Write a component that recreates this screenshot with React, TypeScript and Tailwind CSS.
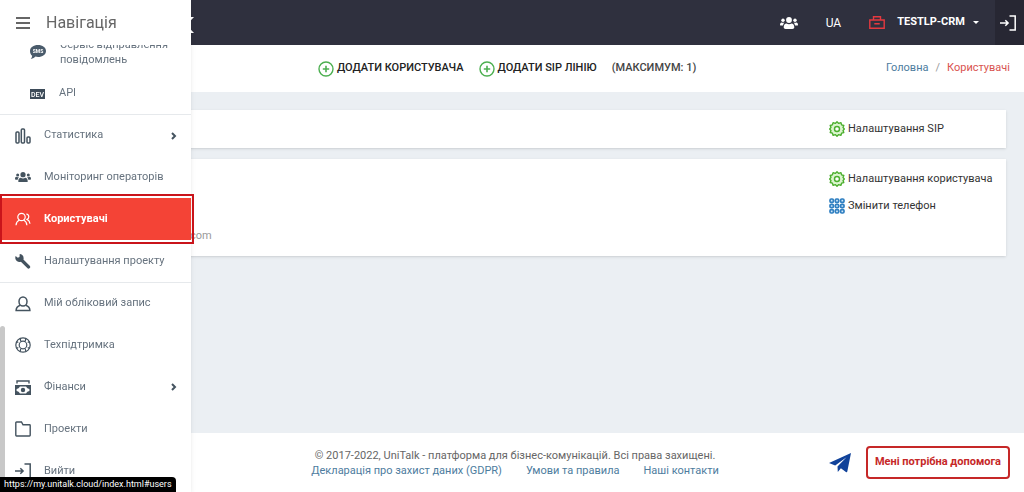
import type { ReactNode, SVGProps } from 'react';
import clsx from 'clsx';

type IconProps = SVGProps<SVGSVGElement>;

const strokeProps = {
  fill: 'none',
  stroke: 'currentColor',
  strokeWidth: 1.4,
};

function MenuIcon(props: IconProps) {
  return (
    <svg viewBox="0 0 14 12" fill="currentColor" {...props}>
      <path d="M0 0h14v2H0zM0 5h14v2H0zM0 10h14v2H0z" />
    </svg>
  );
}

function SmsIcon(props: IconProps) {
  return (
    <svg viewBox="0 0 16 14" {...props}>
      <path fill="currentColor" d="M8 0c4.500 0 8 2.400 8 5.900s-3.500 6-8 6c-.9 0-1.700-.1-2.500-.3C4.500 12.700 3 13.600.8 14c.8-.9 1.300-2 1.400-3.200C.8 9.600 0 7.900 0 5.900 0 2.400 3.500 0 8 0z" />
      <text x="8" y="8" textAnchor="middle" fill="#fff" fontSize="5" fontWeight="700">SMS</text>
    </svg>
  );
}

function DevIcon(props: IconProps) {
  return (
    <svg viewBox="0 0 15 10" {...props}>
      <path fill="currentColor" d="M0 0h15v10H0z" />
      <text x="7.500" y="7.600" textAnchor="middle" fill="#fff" fontSize="7" fontWeight="500">DEV</text>
    </svg>
  );
}

function BarsIcon(props: IconProps) {
  return (
    <svg viewBox="0 0 16 16" {...strokeProps} strokeWidth={1.500} {...props}>
      <rect x="1" y="4" width="3" height="11" rx="1" />
      <rect x="6.300" y="1" width="3.200" height="14" rx="1" />
      <rect x="12" y="9" width="3" height="6" rx="1" />
    </svg>
  );
}

function GroupIcon(props: IconProps) {
  return (
    <svg viewBox="0 0 18 12" fill="currentColor" {...props}>
      <circle cx="9" cy="3" r="2.900" />
      <circle cx="3" cy="3.300" r="1.700" />
      <circle cx="15" cy="3.300" r="1.700" />
      <path d="M3.700 10.300c0-2.500 1.100-3.900 2.800-3.900.7.500 1.500.8 2.500.8s1.800-.3 2.500-.8c1.700 0 2.800 1.400 2.800 3.900 0 1.100-.8 1.700-1.900 1.700H5.600c-1.100 0-1.900-.6-1.900-1.700z" />
      <path d="M0 8c0-1.700.6-2.600 1.600-2.600.9.600 2 .6 2.900.1C3.700 6.200 3.200 7.200 3 8.600H1C.4 8.600 0 8.400 0 8zM18 8c0-1.700-.6-2.600-1.600-2.600-.9.600-2 .6-2.900.1.800.7 1.300 1.700 1.500 3.100h2c.6 0 1-.2 1-.6z" />
    </svg>
  );
}

function UsersIcon(props: IconProps) {
  return (
    <svg viewBox="0 0 16 14" {...strokeProps} strokeWidth={1.200} {...props}>
      <circle cx="6.500" cy="5" r="3.700" />
      <path d="M1 13.200c.2-2.700 1.600-4.300 3.500-5.200M8.500 8c2 .9 3.200 2.500 3.400 5.200" />
      <path d="M11.300 2c1.600.2 2.500 1.300 2.500 2.800 0 1.300-.7 2.200-1.700 2.600 1.600.8 2.700 2.100 2.900 4.300" />
    </svg>
  );
}

function WrenchIcon(props: IconProps) {
  return (
    <svg viewBox="0 0 16 16" fill="currentColor" {...props}>
      <path d="M4.700 1.100 4.500 4 2.800 4.800.6 2.900C-.1 5 .4 6.900 1.800 8c1.200 1 2.800 1.200 4.100.7l6.400 6.400c.7.700 1.700.7 2.400 0s.7-1.700 0-2.400L8.400 6.500c.5-1.400.2-3-.9-4.200-.8-.8-1.800-1.200-2.800-1.200z" />
    </svg>
  );
}

function PersonIcon(props: IconProps) {
  return (
    <svg viewBox="0 0 16 16" {...strokeProps} strokeWidth={1.500} {...props}>
      <ellipse cx="8" cy="5.500" rx="4" ry="4.600" />
      <path d="M5.300 9.200C2.500 10 1.100 11.500 1.100 14.500h13.800c0-3-1.400-4.500-4.200-5.300" />
    </svg>
  );
}

function LifebuoyIcon(props: IconProps) {
  return (
    <svg viewBox="0 0 16 16" {...strokeProps} strokeWidth={1.200} {...props}>
      <circle cx="8" cy="8" r="7.200" />
      <circle cx="8" cy="8" r="3.800" />
      <path d="M5.200 1.400 5.800 4.500M10.800 1.400 10.200 4.500M5.200 14.600 5.800 11.500M10.800 14.600 10.200 11.500M3.300 5.500 1.600 4.600M12.700 5.500l1.700-.9M3.300 10.500l-1.700.9M12.700 10.500l1.700.9" />
    </svg>
  );
}

function MoneyIcon(props: IconProps) {
  return (
    <svg viewBox="0 0 16 15" {...strokeProps} {...props}>
      <path d="M2 3.500V1h12v2.500" />
      <path strokeWidth="1.600" d="M.8 5.800h14.400v8.400H.8z" />
      <circle cx="8" cy="10" r="1.500" fill="currentColor" />
      <path fill="currentColor" stroke="none" d="M1 6h4C4.500 8 3 9 1 9zM15 6h-4c.5 2 2 3 4 3zM1 14h4c-.5-2-2-3-4-3zM15 14h-4c.5-2 2-3 4-3z" />
    </svg>
  );
}

function FolderIcon(props: IconProps) {
  return (
    <svg viewBox="0 0 16 16" {...strokeProps} {...props}>
      <path d="M1.500 1h5L8 3.800h6.500c.4 0 .7.300.7.700v9.800c0 .4-.3.700-.7.700h-13c-.4 0-.7-.3-.7-.7V1.700c0-.4.3-.7.700-.7z" />
    </svg>
  );
}

function LoginIcon(props: IconProps) {
  return (
    <svg viewBox="0 0 16 16" {...strokeProps} strokeWidth={1.500} {...props}>
      <path d="M9.500 1h5.700v14H9.500M0 8h8M5.300 5.200 8.100 8l-2.800 2.800" />
    </svg>
  );
}

function BriefcaseIcon(props: IconProps) {
  return (
    <svg viewBox="0 0 16 13" {...strokeProps} {...props}>
      <path d="M.8 4h14.400v8.200H.8zM4.500 4V.8h7V4M5.300 7.700h5.400" />
    </svg>
  );
}

function PlusCircleIcon(props: IconProps) {
  return (
    <svg viewBox="0 0 16 16" {...strokeProps} {...props}>
      <circle cx="8" cy="8" r="7" />
      <path strokeWidth="1.600" d="M8 4.800v6.400M4.800 8h6.400" />
    </svg>
  );
}

function GearIcon(props: IconProps) {
  return (
    <svg viewBox="0 0 16 16" {...strokeProps} strokeLinejoin="round" {...props}>
      <path
        fill="#dcf5cf"
        d="m8 .8 1.700 1.600 2.200-.8.700 2.200 2.200.7-.8 1.900L15.300 8 14 9.600l.8 1.900-2.200.7-.7 2.200-2.200-.8L8 15.200l-1.700-1.600-2.200.8-.7-2.200-2.200-.7.800-1.900L.7 8 2 6.400l-.8-1.900 2.200-.7.700-2.200 2.200.8z"
      />
      <circle cx="8" cy="8" r="2.500" fill="#fff" />
    </svg>
  );
}

function KeypadIcon(props: IconProps) {
  const steps = [1, 6.300, 11.600];
  return (
    <svg viewBox="0 0 16 16" {...strokeProps} strokeWidth={1.700} {...props}>
      {steps.map((y) => steps.map((x) => (
        <rect key={`${x}-${y}`} x={x} y={y} width="3.400" height="3.400" rx="1.200" fill="#d3e8f8" />
      )))}
    </svg>
  );
}

function ChevronIcon(props: IconProps) {
  return (
    <svg viewBox="0 0 6 8" {...strokeProps} strokeWidth={2} {...props}>
      <path d="m1 1 3 3-3 3" />
    </svg>
  );
}

function PlaneIcon(props: IconProps) {
  return (
    <svg viewBox="0 0 22 20" fill="currentColor" {...props}>
      <path d="M22 0 0 10l6.200 2.400L17.500 4.200 8.500 13.500 8.800 19l3.100-3.700 5 3.700c.6.400 1.200.2 1.400-.5z" />
    </svg>
  );
}

interface NavItem {
  label: string;
  icon: ReactNode;
  active?: boolean;
  expandable?: boolean;
  divided?: boolean;
}

const navItems: NavItem[] = [
  { label: 'Статистика', icon: <BarsIcon className="size-4" />, expandable: true, divided: true },
  { label: 'Моніторинг операторів', icon: <GroupIcon className="w-4" /> },
  { label: 'Користувачі', icon: <UsersIcon className="w-4" />, active: true },
  { label: 'Налаштування проекту', icon: <WrenchIcon className="size-4" /> },
  { label: 'Мій обліковий запис', icon: <PersonIcon className="size-4" />, divided: true },
  { label: 'Техпідтримка', icon: <LifebuoyIcon className="size-4" /> },
  { label: 'Фінанси', icon: <MoneyIcon className="w-4" />, expandable: true },
  { label: 'Проекти', icon: <FolderIcon className="size-4" /> },
  { label: 'Вийти', icon: <LoginIcon className="size-4" /> },
];

function Sidebar() {
  return (
    <aside className="fixed inset-y-0 left-0 flex w-[191px] flex-col bg-white text-[#66727e] shadow-md">
      <div className="flex h-[45px] shrink-0 items-center gap-4 px-4 text-[#666]">
        <button type="button" aria-label="Меню">
          <MenuIcon className="h-3 w-[14px]" />
        </button>
        <h2 className="text-base">Навігація</h2>
      </div>
      <nav className="min-h-0 flex-1 overflow-hidden">
        <ul className="-mt-[14px] text-[11px]">
          <li>
            <a href="#sms" className="flex h-[42px] items-center gap-[14px] pl-[30px] leading-[15px]">
              <SmsIcon className="w-4 shrink-0 text-[#4a5b6b]" />
              <span className="w-28">Сервіс відправлення повідомлень</span>
            </a>
          </li>
          <li>
            <a href="#api" className="flex h-[41px] items-center gap-[14px] pl-[30px]">
              <DevIcon className="w-[15px] shrink-0 text-[#3d4b59]" />
              API
            </a>
          </li>
          {navItems.map((item) => (
            <li key={item.label} className={clsx(item.divided && 'border-t border-[#e6e9ec]', 'h-[42px]')}>
              <a
                href={item.active ? '#users' : '#'}
                className={clsx(
                  'flex h-full items-center gap-[13px] pr-[14px] pl-[15px]',
                  item.active && 'bg-[#f44336] font-bold text-white',
                )}
              >
                <span className={item.active ? 'text-white' : 'text-[#44535f]'}>{item.icon}</span>
                <span className="flex-1">{item.label}</span>
                {item.expandable && <ChevronIcon className="w-[6px] text-[#44535f]" />}
              </a>
            </li>
          ))}
        </ul>
      </nav>
      {/* highlight frame around the current section */}
      <div className="pointer-events-none absolute top-[194px] left-0 h-[50px] w-[194px] border-2 border-[#c9141b]" />
      <div className="absolute bottom-0 left-0 h-[166px] w-[5px] rounded-t bg-[#c8c8c8]" />
    </aside>
  );
}

function TopBar() {
  return (
    <header className="flex h-[45px] items-center justify-between bg-[#2f303e] pl-[180px] text-white">
      <svg viewBox="0 0 14 16" className="mt-1 h-4 w-[14px]" fill="currentColor" aria-label="UniTalk">
        <path d="M0 0h3v6.500L10 0h4L6.500 8 14 16h-4L3 9.500V16H0z" />
      </svg>
      <div className="flex h-full items-center">
        <button type="button" aria-label="Користувачі онлайн">
          <GroupIcon className="w-[18px]" />
        </button>
        <button type="button" className="ml-7 text-xs">UA</button>
        <button type="button" className="mr-4 ml-7 flex items-center text-[11px] font-bold">
          <BriefcaseIcon className="mr-3 w-4 text-[#e5393f]" />
          TESTLP-CRM
          <svg viewBox="0 0 6 3" className="ml-2 w-[6px]" fill="currentColor">
            <path d="M0 0h6L3 3z" />
          </svg>
        </button>
        <button type="button" aria-label="Вийти" className="flex h-full items-center bg-[#272733] pr-2 pl-[5px]">
          <LoginIcon className="size-4" />
        </button>
      </div>
    </header>
  );
}

function SubHeader() {
  return (
    <div className="flex h-[47px] items-center justify-between bg-white pr-[14px] pl-[318px] text-[11px]">
      <div className="flex items-center gap-[15px] font-medium text-[#222]">
        <button type="button" className="flex items-center gap-[3px]">
          <PlusCircleIcon className="size-4 text-[#4caf50]" />
          ДОДАТИ КОРИСТУВАЧА
        </button>
        <button type="button" className="flex items-center gap-[3px]">
          <PlusCircleIcon className="size-4 text-[#4caf50]" />
          ДОДАТИ SIP ЛІНІЮ
        </button>
        <span className="text-[#444]">(МАКСИМУМ: 1)</span>
      </div>
      <div className="flex gap-[7px]">
        <a href="#" className="text-[#4d7c9e]">Головна</a>
        <span className="text-[#999]">/</span>
        <a href="#users" className="text-[#d9534f]">Користувачі</a>
      </div>
    </div>
  );
}

function Action({ icon, children }: { icon: ReactNode; children: ReactNode }) {
  return (
    <button type="button" className="flex items-center gap-[3px]">
      {icon}
      {children}
    </button>
  );
}

export default function App() {
  return (
    <div className="flex min-h-screen flex-col bg-[#ebeff3] font-['Roboto',sans-serif] text-[#333]">
      <TopBar />
      <SubHeader />
      <main className="flex flex-1 flex-col gap-[11px] pt-[18px] pr-[18px] pl-4 text-[11px]">
        <section className="flex h-[38px] items-center justify-end bg-white shadow">
          <div className="w-[177px]">
            <Action icon={<GearIcon className="size-4 text-[#4caf2f]" />}>Налаштування SIP</Action>
          </div>
        </section>
        <section className="flex h-[97px] justify-between bg-white pt-3 pb-3 pl-[171px] shadow">
          <span className="self-end text-[#999]">.com</span>
          <div className="flex w-[177px] flex-col gap-[10px]">
            <Action icon={<GearIcon className="size-4 text-[#4caf2f]" />}>Налаштування користувача</Action>
            <Action icon={<KeypadIcon className="size-4 text-[#2f7fc1]" />}>Змінити телефон</Action>
          </div>
        </section>
      </main>
      <footer className="flex h-[59px] items-center justify-end bg-white pr-[14px] text-[11px]">
        <div className="mr-[110px] text-center leading-[15px] text-[#666]">
          <p>© 2017-2022, UniTalk - платформа для бізнес-комунікацій. Всі права захищені.</p>
          <div className="flex justify-center gap-6 text-[#4d7c9e]">
            <a href="#">Декларація про захист даних (GDPR)</a>
            <a href="#">Умови та правила</a>
            <a href="#">Наші контакти</a>
          </div>
        </div>
        <a href="#" aria-label="Telegram" className="mr-[15px] text-[#10429a]">
          <PlaneIcon className="w-[22px]" />
        </a>
        <button type="button" className="h-[33px] rounded border-2 border-[#c62828] px-[7px] font-bold text-[#c62828]">
          Мені потрібна допомога
        </button>
      </footer>
      <Sidebar />
      <div className="fixed bottom-0 left-0 h-[15px] rounded-tr bg-black px-1 text-[9px] leading-[15px] text-white">
        https://my.unitalk.cloud/index.html#users
      </div>
    </div>
  );
}
